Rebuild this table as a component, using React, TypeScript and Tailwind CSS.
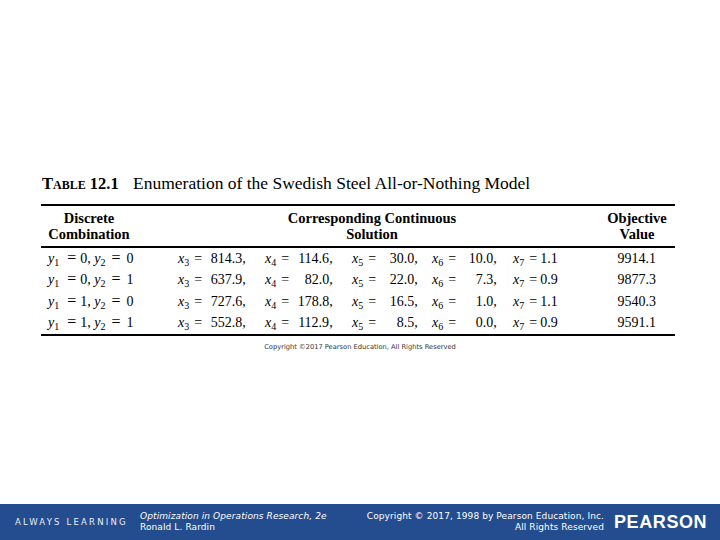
import React from "react";

const serif = { fontFamily: '"Liberation Serif", "Times New Roman", serif' };
const sans = { fontFamily: '"DejaVu Sans", Verdana, sans-serif' };

type Row = { y1: string; y2: string; xs: string[]; value: string };

const rows: Row[] = [
  { y1: "0", y2: "0", xs: ["814.3", "114.6", "30.0", "10.0", "1.1"], value: "9914.1" },
  { y1: "0", y2: "1", xs: ["637.9", "82.0", "22.0", "7.3", "0.9"], value: "9877.3" },
  { y1: "1", y2: "0", xs: ["727.6", "178.8", "16.5", "1.0", "1.1"], value: "9540.3" },
  { y1: "1", y2: "1", xs: ["552.8", "112.9", "8.5", "0.0", "0.9"], value: "9591.1" },
];

// column widths for x3..x7 cells, and the box each number is right-aligned in
const colW = ["w-[87px]", "w-[87px]", "w-[80px]", "w-[81px]", "w-[60px]"];
const numW = ["w-[37px]", "w-[37px]", "w-[35px]", "w-[34px]", ""];

function Var({ v, s }: { v: string; s: string | number }) {
  return (
    <span>
      <i>{v}</i>
      <sub className="text-[10px] align-baseline relative top-[3px]">{s}</sub>
    </span>
  );
}

function Eq({ className = "mx-[6px]" }: { className?: string }) {
  return <span className={className}>=</span>;
}

export default function App() {
  return (
    <div className="w-[720px] h-[540px] flex flex-col bg-white overflow-hidden" style={serif}>
      <div className="flex-1 pt-[170px] pl-[41px]">
        <div className="w-[634px]">
          <div className="flex items-baseline text-[17.5px] text-black h-[22px] pl-[1px]">
            <span className="font-bold w-[91px] text-[16.5px]">
              T<span className="text-[12px]">ABLE</span> 12.1
            </span>
            <span>Enumeration of the Swedish Steel All-or-Nothing Model</span>
          </div>
          <div className="mt-[12px] border-t-2 border-black" />
          <div className="flex items-start font-bold text-[14.5px] leading-[16px] pt-[4px] pb-[4px]">
            <div className="w-[96px] text-center">
              Discrete
              <br />
              Combination
            </div>
            <div className="w-[470px] text-center">
              Corresponding Continuous
              <br />
              Solution
            </div>
            <div className="w-[60px] text-center">
              Objective
              <br />
              Value
            </div>
          </div>
          <div className="border-t-2 border-black" />
          <div className="pb-[1px] text-[14px]">
            {rows.map((r, i) => (
              <div key={i} className="flex items-center h-[21.3px] whitespace-pre">
                <div className="w-[137px] pl-[7px]">
                  <Var v="y" s={1} />
                  <Eq className="ml-[8px] mr-[4px] text-[16px] leading-none" />
                  {r.y1}, <Var v="y" s={2} />
                  <Eq className="ml-[6px] mr-[6px] text-[16px] leading-none" />
                  {r.y2}
                </div>
                {r.xs.map((x, j) => (
                  <div key={j} className={colW[j]}>
                    <Var v="x" s={j + 3} />
                    <Eq className="ml-[5px] mr-[3px]" />
                    <span className={`inline-block text-right ${numW[j]}`}>{x}</span>
                    {j < 4 ? "," : ""}
                  </div>
                ))}
                <div className="flex-1 text-right pr-[19px]">{r.value}</div>
              </div>
            ))}
          </div>
          <div className="border-t-2 border-black" />
          <div className="text-[6.7px] text-[#333] text-center pl-[4px] mt-[6px]" style={sans}>
            Copyright ©2017 Pearson Education, All Rights Reserved
          </div>
        </div>
      </div>
      <div className="h-[36px] bg-[#234d8f] flex items-center text-white" style={sans}>
        <div className="w-[140px] pl-[15px] text-[8.5px] tracking-[2.2px] text-[#e8eef8]">ALWAYS LEARNING</div>
        <div className="w-[226px] text-[9px] leading-[11px] tracking-[0.1px]">
          <div className="italic">Optimization in Operations Research, 2e</div>
          <div>Ronald L. Rardin</div>
        </div>
        <div className="w-[238px] text-[9px] leading-[11px] tracking-[0.1px] text-right">
          <div>Copyright © 2017, 1998 by Pearson Education, Inc.</div>
          <div>All Rights Reserved</div>
        </div>
        <div
          className="flex-1 pl-[10px] text-[18px] font-bold tracking-[0.6px]"
          style={{ fontFamily: '"Liberation Sans", Arial, sans-serif' }}
        >
          PEARSON
        </div>
      </div>
    </div>
  );
}
